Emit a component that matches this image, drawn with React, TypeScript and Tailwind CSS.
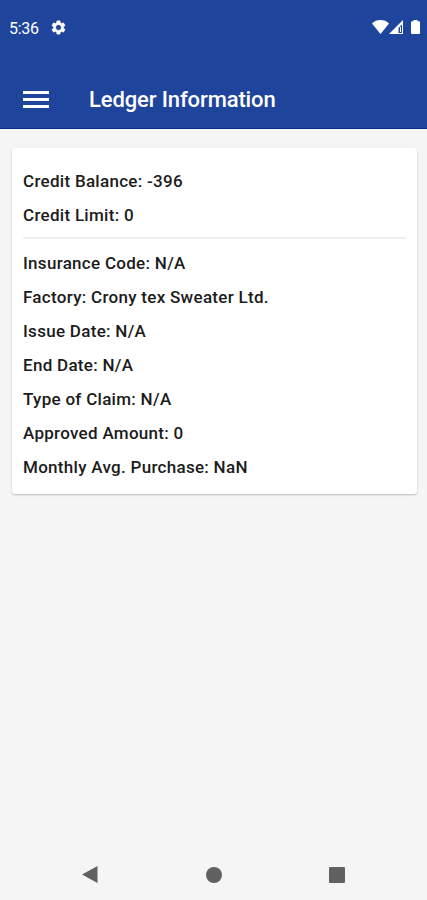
import React from 'react';

const balances = [
  { label: 'Credit Balance', value: '-396' },
  { label: 'Credit Limit', value: '0' },
];

const details = [
  { label: 'Insurance Code', value: 'N/A' },
  { label: 'Factory', value: 'Crony tex Sweater Ltd.' },
  { label: 'Issue Date', value: 'N/A' },
  { label: 'End Date', value: 'N/A' },
  { label: 'Type of Claim', value: 'N/A' },
  { label: 'Approved Amount', value: '0' },
  { label: 'Monthly Avg. Purchase', value: 'NaN' },
];

const Row = ({ label, value }: { label: string; value: string }) => (
  <p className="h-[34.05px] leading-[34px] whitespace-nowrap">
    <span>{`${label}: ${value}`}</span>
  </p>
);

const StatusBar = () => (
  <div className="flex h-14 items-center justify-between pl-[9px] pr-[7px] text-white">
    <div className="flex items-center gap-[11px]">
      <span className="text-base tracking-[-0.3px] pt-px">5:36</span>
      <svg className="h-[17px] w-[17px] -mt-0.5" viewBox="0 0 24 24" fill="currentColor" stroke="currentColor" strokeWidth="0.5">
        <path d="M19.14 12.94c.04-.3.06-.61.06-.94 0-.32-.02-.64-.07-.94l2.03-1.58a.49.49 0 0 0 .12-.61l-1.92-3.32a.49.49 0 0 0-.59-.22l-2.39.96c-.5-.38-1.03-.7-1.62-.94l-.36-2.54a.48.48 0 0 0-.48-.41h-3.84c-.24 0-.43.17-.47.41l-.36 2.54c-.59.24-1.13.57-1.62.94l-2.39-.96a.48.48 0 0 0-.59.22L2.74 8.87c-.12.21-.08.47.12.61l2.03 1.58c-.05.3-.09.63-.09.94s.02.64.07.94l-2.03 1.58a.49.49 0 0 0-.12.61l1.92 3.32c.12.22.37.29.59.22l2.39-.96c.5.38 1.03.7 1.62.94l.36 2.54c.05.24.24.41.48.41h3.84c.24 0 .44-.17.47-.41l.36-2.54c.59-.24 1.13-.56 1.62-.94l2.39.96c.22.08.47 0 .59-.22l1.92-3.32a.49.49 0 0 0-.12-.61l-2.01-1.58zM12 15.8a3.8 3.8 0 1 1 0-7.6 3.8 3.8 0 0 1 0 7.6z" />
      </svg>
    </div>
    <div className="flex items-center -mt-0.5">
      <svg className="h-[14px] w-[17px]" viewBox="0 0 17 14" fill="currentColor">
        <path d="M0 3.4C2.3 1.2 5.2 0 8.5 0s6.2 1.2 8.5 3.4L8.5 14z" />
      </svg>
      <svg className="h-[14px] w-[14px]" viewBox="0 0 14 14">
        <path d="M14 0v14H0z" fill="white" />
        <path d="M13 4.5v8.5h-3.5V8z" fill="#1f449c" />
        <path d="M11.5 7v5" stroke="white" />
      </svg>
      <svg className="ml-2 mr-[0.5px] h-[14px] w-[9px]" viewBox="0 0 9 14" fill="currentColor">
        <path d="M2.5 0h4v1.3H8a1 1 0 0 1 1 1V13a1 1 0 0 1-1 1H1a1 1 0 0 1-1-1V2.3a1 1 0 0 1 1-1h1.5z" />
      </svg>
    </div>
  </div>
);

const AppBar = () => (
  <div className="flex h-[73px] items-center border-b border-[#0c2c85] pt-4 pl-[23px] text-white">
    <button aria-label="Menu" className="flex w-[26px] flex-col gap-1 pb-px">
      <span className="h-[3px] bg-white" />
      <span className="h-[3px] bg-white" />
      <span className="h-[3px] bg-white" />
    </button>
    <h1 className="ml-10 text-[22px] leading-7 font-medium tracking-[-0.12px]">Ledger Information</h1>
  </div>
);

const NavBar = () => (
  <div className="mt-auto flex h-[51px] items-center justify-between px-[82px] text-[#616161]">
    <svg className="h-[17px] w-[16px]" viewBox="0 0 16 17" fill="currentColor">
      <path d="M15.5 0v17L0 8.5z" />
    </svg>
    <span className="h-4 w-4 rounded-full bg-[#616161]" />
    <span className="h-4 w-4 rounded-[1px] bg-[#616161]" />
  </div>
);

const App = () => {
  return (
    <div className="flex h-[900px] w-full flex-col bg-[#f5f5f5] font-['Roboto',sans-serif]">
      <header className="bg-[#1f449c]">
        <StatusBar />
        <AppBar />
      </header>
      <main className="mx-[10px] mt-[19px]">
        <section className="ml-[2px] h-[346px] rounded-[3px] bg-white px-[11px] pt-4 text-[17px] font-medium tracking-[0.29px] text-[#1c1c1c] shadow-[0_1px_2px_rgba(0,0,0,0.24)]">
          {balances.map((item) => (
            <Row key={item.label} {...item} />
          ))}
          <hr className="mt-[5px] mb-[7px] border-t-2 border-[#f0f0f0]" />
          {details.map((item) => (
            <Row key={item.label} {...item} />
          ))}
        </section>
      </main>
      <NavBar />
    </div>
  );
};

export default App;
